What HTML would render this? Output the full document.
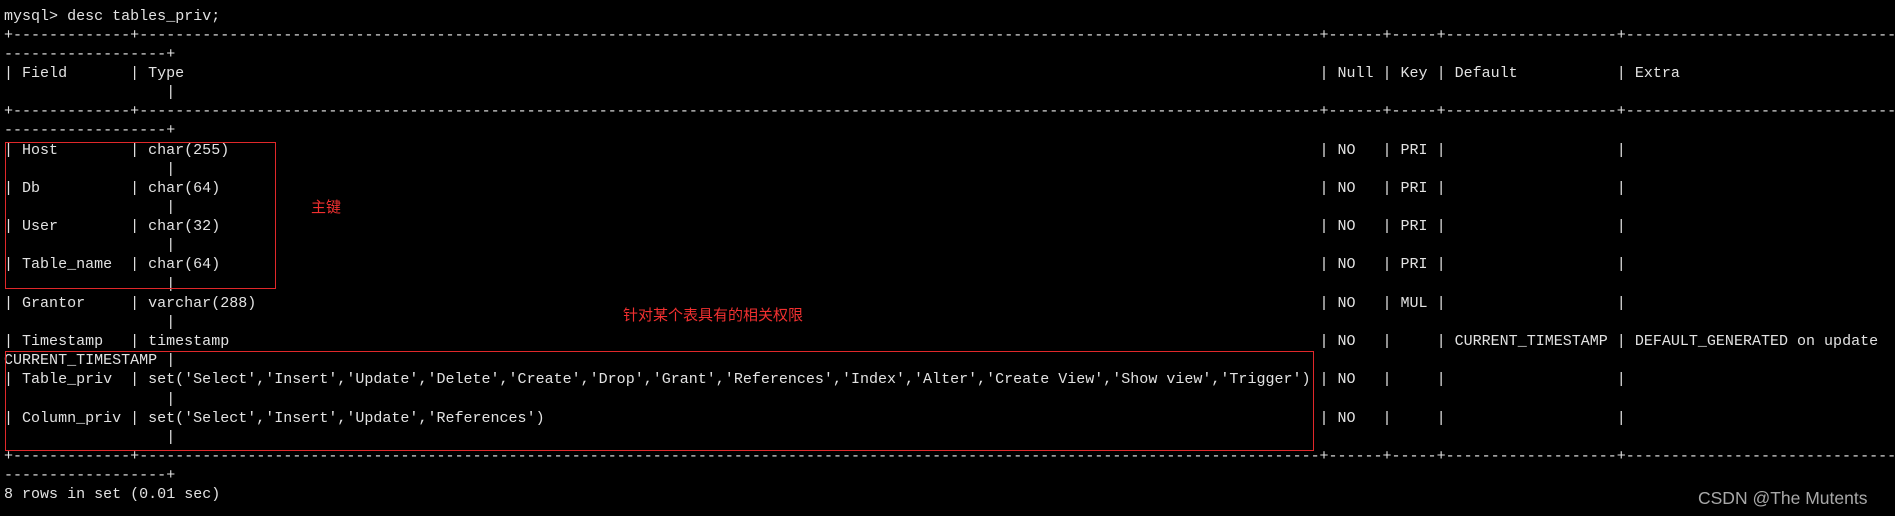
<!DOCTYPE html>
<html><head><meta charset="utf-8"><style>
html,body{margin:0;padding:0;background:#000;width:1895px;height:516px;overflow:hidden;position:relative}
.l{position:absolute;left:0;height:19px;width:1895px}
.s{position:absolute;top:0;white-space:pre;font-family:"Liberation Mono",monospace;font-size:15.02px;line-height:19px;color:#e2e2e2;overflow:hidden}
.box{position:absolute;border:1px solid #e0282a}
.cn{position:absolute;color:#f03030;font-family:"Liberation Sans","Noto Sans CJK SC",sans-serif;font-size:15px;line-height:15px;white-space:nowrap}
.wm{position:absolute;left:1698px;top:488px;color:#a8a8a8;font-family:"Liberation Sans",sans-serif;font-size:17.5px;line-height:20px;white-space:nowrap}
</style></head><body>

<div class="l" style="top:7px"><span class="s" style="left:4px">mysql&gt; desc tables_priv;</span></div>

<div class="l" style="top:25.6px">
<span class="s" style="left:4px">+</span><span class="s" style="left:13px;width:117.1px">------------------------------------------------------------</span>
<span class="s" style="left:130.1px">+</span><span class="s" style="left:139.2px;width:1180.3px">--------------------------------------------------------------------------------------------------------------------------------------------------------------</span>
<span class="s" style="left:1319.5px">+</span><span class="s" style="left:1328.5px;width:54px">--------------</span>
<span class="s" style="left:1382.5px">+</span><span class="s" style="left:1391.5px;width:45.1px">--------------</span>
<span class="s" style="left:1436.6px">+</span><span class="s" style="left:1445.6px;width:171.2px">------------------------------</span>
<span class="s" style="left:1616.8px">+</span><span class="s" style="left:1625.8px;width:270px">------------------------------------------</span>
</div>
<div class="l" style="top:44.8px"><span class="s" style="left:4px">------------------+</span></div>

<div class="l" style="top:63.9px">
<span class="s" style="left:4px">| Field</span><span class="s" style="left:130.1px">| Type</span><span class="s" style="left:1319.5px">| Null</span><span class="s" style="left:1382.5px">| Key</span><span class="s" style="left:1436.6px">| Default</span><span class="s" style="left:1616.8px">| Extra</span>
</div>
<div class="l" style="top:83.1px"><span class="s" style="left:166.2px">|</span></div>

<div class="l" style="top:102.2px">
<span class="s" style="left:4px">+</span><span class="s" style="left:13px;width:117.1px">------------------------------------------------------------</span>
<span class="s" style="left:130.1px">+</span><span class="s" style="left:139.2px;width:1180.3px">--------------------------------------------------------------------------------------------------------------------------------------------------------------</span>
<span class="s" style="left:1319.5px">+</span><span class="s" style="left:1328.5px;width:54px">--------------</span>
<span class="s" style="left:1382.5px">+</span><span class="s" style="left:1391.5px;width:45.1px">--------------</span>
<span class="s" style="left:1436.6px">+</span><span class="s" style="left:1445.6px;width:171.2px">------------------------------</span>
<span class="s" style="left:1616.8px">+</span><span class="s" style="left:1625.8px;width:270px">------------------------------------------</span>
</div>
<div class="l" style="top:121.4px"><span class="s" style="left:4px">------------------+</span></div>

<div class="l" style="top:140.5px"><span class="s" style="left:4px">| Host</span><span class="s" style="left:130.1px">| char(255)</span><span class="s" style="left:1319.5px">| NO</span><span class="s" style="left:1382.5px">| PRI</span><span class="s" style="left:1436.6px">|</span><span class="s" style="left:1616.8px">|</span></div>
<div class="l" style="top:159.7px"><span class="s" style="left:166.2px">|</span></div>

<div class="l" style="top:178.8px"><span class="s" style="left:4px">| Db</span><span class="s" style="left:130.1px">| char(64)</span><span class="s" style="left:1319.5px">| NO</span><span class="s" style="left:1382.5px">| PRI</span><span class="s" style="left:1436.6px">|</span><span class="s" style="left:1616.8px">|</span></div>
<div class="l" style="top:198px"><span class="s" style="left:166.2px">|</span></div>

<div class="l" style="top:217.1px"><span class="s" style="left:4px">| User</span><span class="s" style="left:130.1px">| char(32)</span><span class="s" style="left:1319.5px">| NO</span><span class="s" style="left:1382.5px">| PRI</span><span class="s" style="left:1436.6px">|</span><span class="s" style="left:1616.8px">|</span></div>
<div class="l" style="top:236.3px"><span class="s" style="left:166.2px">|</span></div>

<div class="l" style="top:255.4px"><span class="s" style="left:4px">| Table_name</span><span class="s" style="left:130.1px">| char(64)</span><span class="s" style="left:1319.5px">| NO</span><span class="s" style="left:1382.5px">| PRI</span><span class="s" style="left:1436.6px">|</span><span class="s" style="left:1616.8px">|</span></div>
<div class="l" style="top:274.6px"><span class="s" style="left:166.2px">|</span></div>

<div class="l" style="top:293.7px"><span class="s" style="left:4px">| Grantor</span><span class="s" style="left:130.1px">| varchar(288)</span><span class="s" style="left:1319.5px">| NO</span><span class="s" style="left:1382.5px">| MUL</span><span class="s" style="left:1436.6px">|</span><span class="s" style="left:1616.8px">|</span></div>
<div class="l" style="top:312.9px"><span class="s" style="left:166.2px">|</span></div>

<div class="l" style="top:332px"><span class="s" style="left:4px">| Timestamp</span><span class="s" style="left:130.1px">| timestamp</span><span class="s" style="left:1319.5px">| NO</span><span class="s" style="left:1382.5px">|</span><span class="s" style="left:1436.6px">| CURRENT_TIMESTAMP</span><span class="s" style="left:1616.8px">| DEFAULT_GENERATED on update</span></div>
<div class="l" style="top:351.2px"><span class="s" style="left:4px">CURRENT_TIMESTAMP |</span></div>

<div class="l" style="top:370.3px"><span class="s" style="left:4px">| Table_priv</span><span class="s" style="left:130.1px">| set('Select','Insert','Update','Delete','Create','Drop','Grant','References','Index','Alter','Create View','Show view','Trigger')</span><span class="s" style="left:1319.5px">| NO</span><span class="s" style="left:1382.5px">|</span><span class="s" style="left:1436.6px">|</span><span class="s" style="left:1616.8px">|</span></div>
<div class="l" style="top:389.5px"><span class="s" style="left:166.2px">|</span></div>

<div class="l" style="top:408.6px"><span class="s" style="left:4px">| Column_priv</span><span class="s" style="left:130.1px">| set('Select','Insert','Update','References')</span><span class="s" style="left:1319.5px">| NO</span><span class="s" style="left:1382.5px">|</span><span class="s" style="left:1436.6px">|</span><span class="s" style="left:1616.8px">|</span></div>
<div class="l" style="top:427.8px"><span class="s" style="left:166.2px">|</span></div>

<div class="l" style="top:446.9px">
<span class="s" style="left:4px">+</span><span class="s" style="left:13px;width:117.1px">------------------------------------------------------------</span>
<span class="s" style="left:130.1px">+</span><span class="s" style="left:139.2px;width:1180.3px">--------------------------------------------------------------------------------------------------------------------------------------------------------------</span>
<span class="s" style="left:1319.5px">+</span><span class="s" style="left:1328.5px;width:54px">--------------</span>
<span class="s" style="left:1382.5px">+</span><span class="s" style="left:1391.5px;width:45.1px">--------------</span>
<span class="s" style="left:1436.6px">+</span><span class="s" style="left:1445.6px;width:171.2px">------------------------------</span>
<span class="s" style="left:1616.8px">+</span><span class="s" style="left:1625.8px;width:270px">------------------------------------------</span>
</div>
<div class="l" style="top:466.1px"><span class="s" style="left:4px">------------------+</span></div>
<div class="l" style="top:485.2px"><span class="s" style="left:4px">8 rows in set (0.01 sec)</span></div>

<div class="box" style="left:5px;top:142px;width:269px;height:145px"></div>
<div class="box" style="left:5px;top:351px;width:1307px;height:98px"></div>

<div class="cn" style="left:311px;top:200px">主键</div>
<div class="cn" style="left:623px;top:308px">针对某个表具有的相关权限</div>

<div class="wm">CSDN @The Mutents</div>
</body></html>
